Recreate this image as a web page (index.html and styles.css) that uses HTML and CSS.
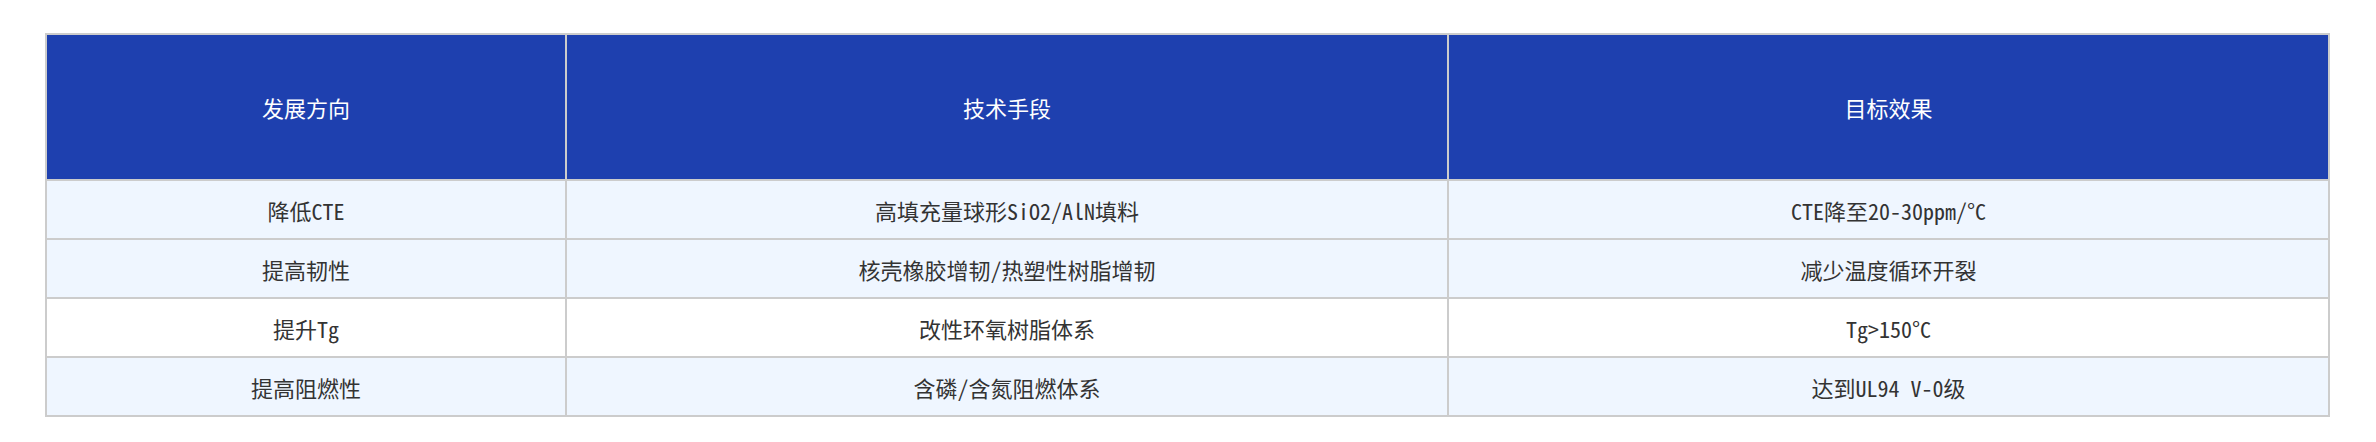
FILE: index.html
```html
<!DOCTYPE html>
<html lang="zh-CN">
<head>
<meta charset="utf-8">
<title>发展方向</title>
<link rel="stylesheet" href="styles.css">
</head>
<body>
<div class="wrap">
<table class="tbl">
<colgroup>
<col class="c1">
<col class="c2">
<col class="c3">
</colgroup>
<thead>
<tr><th>发展方向</th><th>技术手段</th><th>目标效果</th></tr>
</thead>
<tbody>
<tr class="tint"><td>降低CTE</td><td>高填充量球形SiO2/AlN填料</td><td>CTE降至20-30ppm/°C</td></tr>
<tr class="tint"><td>提高韧性</td><td>核壳橡胶增韧/热塑性树脂增韧</td><td>减少温度循环开裂</td></tr>
<tr class="plain"><td>提升Tg</td><td>改性环氧树脂体系</td><td>Tg&gt;150°C</td></tr>
<tr class="tint"><td>提高阻燃性</td><td>含磷/含氮阻燃体系</td><td>达到UL94 V-0级</td></tr>
</tbody>
</table>
</div>
</body>
</html>
```

FILE: styles.css
```css
html, body {
  margin: 0;
  padding: 0;
  background: #ffffff;
}
.wrap {
  padding: 33px 46px 0 45px;
}
.tbl {
  width: 2285px;
  table-layout: fixed;
  border-collapse: separate;
  border-spacing: 0;
  border-top: 2px solid #cccccc;
  border-left: 2px solid #cccccc;
  font-family: "Noto Sans Mono CJK SC", "Noto Sans CJK SC", monospace;
  font-size: 22px;
  color: #333333;
}
.c1 { width: 520px; }
.c2 { width: 882px; }
.c3 { width: 881px; }
.tbl th, .tbl td {
  border-right: 2px solid #cccccc;
  border-bottom: 2px solid #cccccc;
  text-align: center;
  vertical-align: middle;
  line-height: 30px;
  font-weight: normal;
}
.tbl th {
  background: #1e40af;
  color: #ffffff;
  padding: 57px 10px;
}
.tbl td {
  padding: 13.5px 10px;
}
.tint td { background: #eff6ff; }
.plain td { background: #ffffff; }
```
